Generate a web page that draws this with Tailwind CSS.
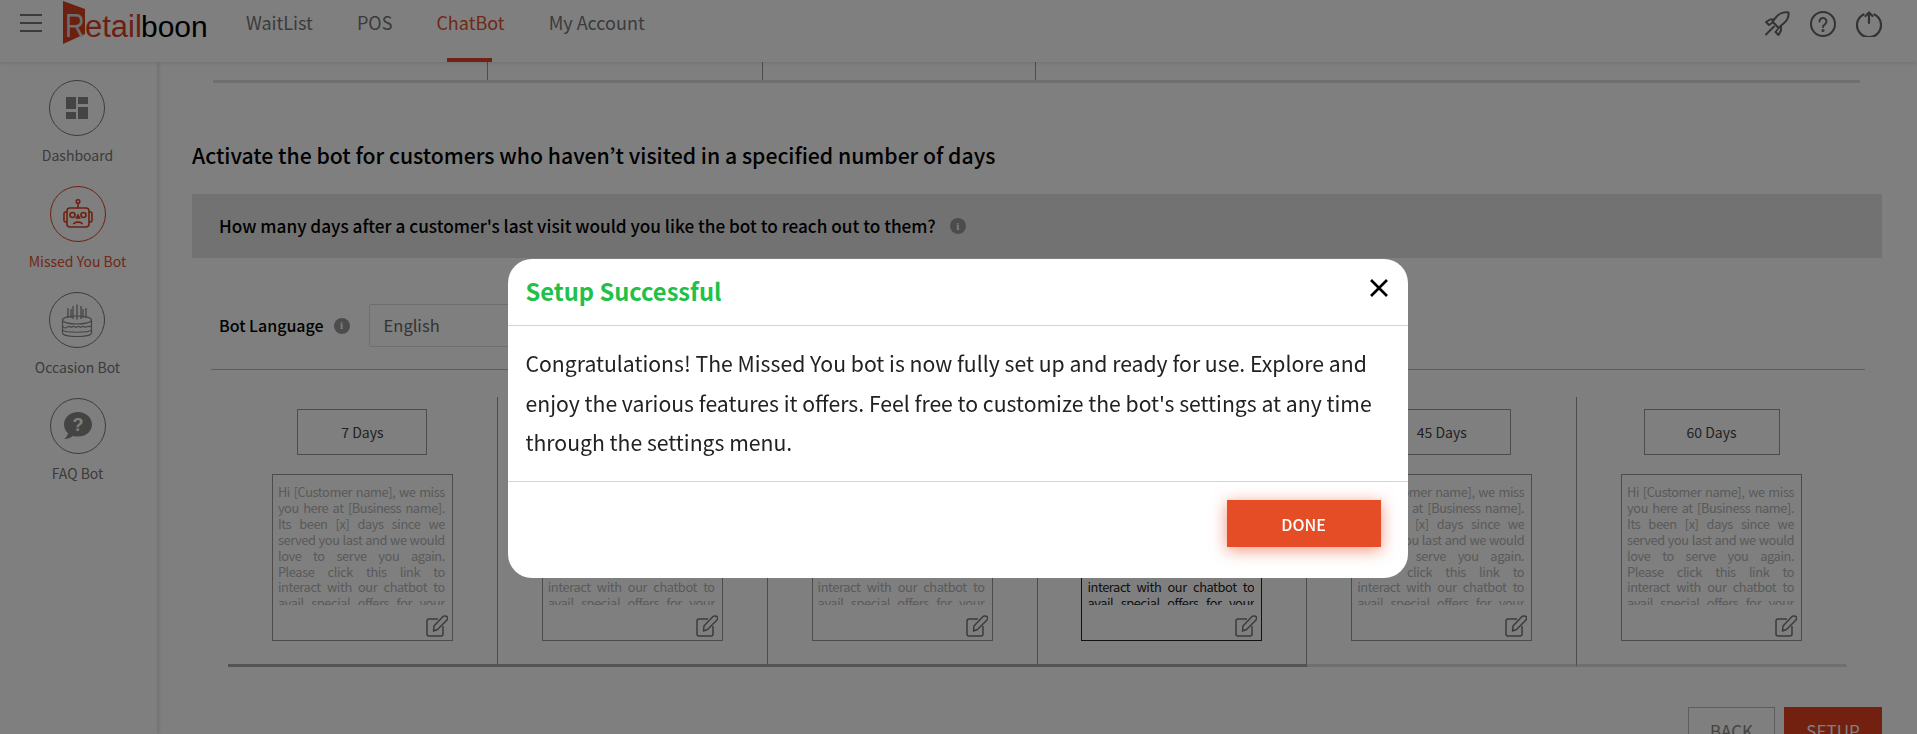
<!DOCTYPE html>
<html lang="en">
<head>
  <meta charset="UTF-8" />
  <title>Retailboon - Missed You Bot</title>
  <script src="https://cdn.jsdelivr.net/npm/@tailwindcss/browser@4"></script>
</head>
<body class="h-screen overflow-hidden bg-white font-['Noto_Sans_CJK_JP','Noto_Sans',sans-serif] text-[#222]">

  <!-- header -->
  <header class="h-[62px] flex items-start bg-white shadow-[0_1px_4px_rgba(0,0,0,0.12)] relative z-10">
    <button class="ml-[20px] mt-[14px] w-[22px] h-[18px] flex flex-col justify-between">
      <span class="block h-[2px] bg-[#777]"></span>
      <span class="block h-[2px] bg-[#777]"></span>
      <span class="block h-[2px] bg-[#777]"></span>
    </button>
    <div class="relative ml-[21px] w-[146px] h-[44px] mt-[1px]">
      <svg class="absolute left-0 top-0" width="24" height="44" viewBox="0 0 24 44"><polygon points="0,0 22,8 22,33 0,43" fill="#d9401f"/></svg>
      <div class="absolute left-[2px] top-[6px] flex items-baseline font-['Liberation_Sans',sans-serif] leading-[36px] whitespace-nowrap">
        <span class="text-[34px] text-[#ddd] inline-block w-[20px] origin-left scale-x-[0.8]">R</span><span class="text-[31px] text-[#d9401f] inline-block w-[56px]">etail</span><span class="text-[30px] text-black">boon</span>
      </div>
    </div>
    <nav class="flex ml-[37px] h-[62px] text-[18px] text-[#777]">
      <a class="pt-[9px] whitespace-nowrap">WaitList</a>
      <a class="ml-[44px] pt-[9px]">POS</a>
      <a class="ml-[44px] pt-[9px] whitespace-nowrap relative text-[#e4502f]">ChatBot<span class="absolute left-[11px] bottom-0 w-[45px] h-[4px] bg-[#e0472a]"></span></a>
      <a class="ml-[44px] pt-[9px] whitespace-nowrap">My Account</a>
    </nav>
    <div class="ml-auto mr-[35px] mt-[11px] flex gap-[20px] text-[#666]">
      <svg width="26" height="26" viewBox="0 0 26 26" fill="none" stroke="currentColor" stroke-width="2" stroke-linejoin="round" stroke-linecap="round">
        <path d="M24.500 1.500c-4.500-.6-8.500.6-11.500 3.600L8.500 10.500 14.500 17l5-4.500C23 9.500 25 5.500 24.500 1.500z"/><path d="M10 8.500H6L2 11l3 3 3-2"/><path d="M17 15v4.500l-2.500 4.500-3-3 2-2.500"/><path d="M10 15.500 2 23.500"/>
      </svg>
      <svg width="26" height="26" viewBox="0 0 26 26" fill="none" stroke="currentColor" stroke-width="2" stroke-linecap="round">
        <circle cx="13" cy="13" r="12"/><path d="M9.500 10.500a3.500 3.500 0 1 1 5.500 2.800c-1.200.8-2 1.400-2 2.700"/><circle cx="13" cy="19.500" r="0.600"/>
      </svg>
      <svg width="26" height="26" viewBox="0 0 26 26" fill="none" stroke="currentColor" stroke-width="2.200" stroke-linecap="round" stroke-linejoin="round">
        <path d="M7.500 3.500a12 12 0 1 0 11 0"/><path d="M13 12V1.500M9.500 5 13 1.500 16.500 5"/>
      </svg>
    </div>
  </header>

  <div class="flex h-[672px]">
    <!-- sidebar -->
    <aside class="w-[157px] shrink-0 pt-[18px] pr-[2px] flex flex-col items-center shadow-[2px_0_4px_rgba(0,0,0,0.12)] text-[14px] leading-[20px] text-[#777]">
      <div class="h-[106px] flex flex-col items-center">
        <div class="w-[56px] h-[56px] rounded-full border border-[#777] flex items-center justify-center">
          <svg width="22" height="22" viewBox="0 0 22 22" fill="#888"><rect width="10" height="12"/><rect x="12" width="10" height="7"/><rect y="15" width="10" height="7"/><rect x="12" y="10" width="10" height="12"/></svg>
        </div>
        <span class="mt-[9px]">Dashboard</span>
      </div>
      <div class="h-[106px] flex flex-col items-center text-[#e4502f]">
        <div class="w-[56px] h-[56px] rounded-full border border-[#d9401f] flex items-center justify-center">
          <svg width="30" height="30" viewBox="0 0 30 30" fill="none" stroke="#d9401f" stroke-width="1.600">
            <circle cx="15" cy="2.500" r="1.800"/><path d="M15 4.500V9"/><rect x="4" y="9" width="22" height="19" rx="3"/><path d="M4 13H2.500a1.500 1.500 0 0 0-1.500 1.500v7A1.500 1.500 0 0 0 2.500 23H4M26 13h1.500a1.500 1.500 0 0 1 1.500 1.500v7a1.500 1.500 0 0 1-1.500 1.500H26"/><circle cx="9.500" cy="16" r="2.500"/><circle cx="20.500" cy="16" r="2.500"/><path d="M15 16l1.500 3h-3z" fill="#d9401f"/><path d="M10.500 25c1.500-2.500 7.500-2.500 9 0"/>
          </svg>
        </div>
        <span class="mt-[9px]">Missed You Bot</span>
      </div>
      <div class="h-[106px] flex flex-col items-center">
        <div class="w-[56px] h-[56px] rounded-full border border-[#777] flex items-center justify-center">
          <svg width="32" height="34" viewBox="0 0 32 34" fill="none" stroke="#888" stroke-width="1.200">
            <path d="M7 5v10M12 3v13M16 1.500v15M20 3v13M25 5v10M10 6v9M22 6v9" stroke-width="1.300"/>
            <ellipse cx="16" cy="17" rx="14.500" ry="4"/><path d="M1.500 17v13c0 2 6.500 3.500 14.500 3.500s14.500-1.500 14.500-3.500V17"/><path d="M1.500 23c2 2.500 3.500 2.500 5 .8s3 1.700 4.800 0 3 1.700 4.700 0 3 1.700 4.800 0 3 1.700 4.700 0 3 1 4.500-.8"/><path d="M1.500 27c2 3 27 3 29 0"/>
          </svg>
        </div>
        <span class="mt-[9px]">Occasion Bot</span>
      </div>
      <div class="flex flex-col items-center">
        <div class="w-[56px] h-[56px] rounded-full border border-[#777] flex items-center justify-center">
          <svg width="30" height="28" viewBox="0 0 30 28"><path fill="#888" d="M15 0C7 0 1 5.500 1 12.500c0 3.500 1.500 6.500 4 8.700-.5 2.500-2 4.500-4 5.800 3.500 0 6.500-1 9-3 1.600.4 3.300.6 5 .6 8 0 14-5.200 14-12.100S23 0 15 0z"/><text x="15" y="19" text-anchor="middle" font-size="18" font-weight="700" font-family="Liberation Sans, sans-serif" fill="#fff">?</text></svg>
        </div>
        <span class="mt-[9px]">FAQ Bot</span>
      </div>
    </aside>

    <!-- main content -->
    <main class="flex-1 pl-[35px] pr-[35px] min-w-0">
      <div class="ml-[21px] w-[1647px] h-[21px] flex border-b-[3px] border-[#dedede]">
        <div class="w-[275px] border-r border-[#999]"></div>
        <div class="w-[275px] border-r border-[#999]"></div>
        <div class="w-[273px] border-r border-[#999]"></div>
      </div>

      <h1 class="mt-[56px] text-[21.200px] leading-[32px] font-medium text-black">Activate the bot for customers who haven’t visited in a specified number of days</h1>

      <div class="mt-[23px] h-[64px] bg-[#e4e4e4] pl-[27px] flex items-center text-[17.200px] font-medium text-black">
        How many days after a customer's last visit would you like the bot to reach out to them?
        <span class="ml-[14px] w-[16px] h-[16px] rounded-full bg-[#999] text-white text-[11px] font-bold flex items-center justify-center font-['Liberation_Serif',serif]">i</span>
      </div>

      <div class="mt-[46px] pl-[27px] h-[43px] flex items-center text-black">
        <span class="text-[16px] font-medium -mt-[2px]">Bot Language</span>
        <span class="ml-[10px] w-[16px] h-[16px] rounded-full bg-[#999] text-white text-[11px] font-bold flex items-center justify-center font-['Liberation_Serif',serif]">i</span>
        <div class="ml-[19px] w-[300px] h-[43px] border border-[#ddd] rounded-[2px] pl-[14px] flex items-center text-[16.500px] text-[#666]">English</div>
      </div>

      <div class="ml-[19px] w-[1654px] mt-[22px] border-b border-[#bbb]"></div>

      <div id="days" class="ml-[36px] w-[1619px] mt-[27px] grid grid-cols-6"></div>

      <div class="mt-[40px] flex justify-end gap-[9px] text-[17px]">
        <button class="w-[87px] h-[47px] border border-[#bbb] text-[#888]">BACK</button>
        <button class="w-[98px] h-[47px] bg-[#e4411f] text-white">SETUP</button>
      </div>
    </main>
  </div>

  <!-- modal -->
  <div class="fixed inset-0 z-20 bg-black/50 flex justify-center pt-[259px] pr-[2px]">
    <div class="w-[900px] h-[319px] bg-white rounded-[24px] flex flex-col">
      <div class="h-[67px] shrink-0 border-b border-[#d4d4d4] pl-[18px] pr-[19px] flex items-center justify-between">
        <h2 class="text-[23.700px] font-semibold text-[#1fc14a]">Setup Successful</h2>
        <svg class="mb-[8px]" width="20" height="20" viewBox="0 0 20 20" stroke="#000" stroke-width="2.600"><path d="M2 2l16 16M18 2L2 18"/></svg>
      </div>
      <p class="h-[156px] shrink-0 border-b border-[#d4d4d4] pl-[18px] pr-[30px] pt-[17px] text-[21.200px] leading-[39.500px] text-[#222]">Congratulations! The Missed You bot is now fully set up and ready for use. Explore and enjoy the various features it offers. Feel free to customize the bot's settings at any time through the settings menu.</p>
      <div class="flex justify-end pr-[27px] pt-[18px]">
        <button class="w-[154px] h-[47px] bg-[#e54d26] text-white text-[16px] font-medium shadow-[0_3px_16px_rgba(229,77,38,0.6)]">DONE</button>
      </div>
    </div>
  </div>

  <script>
    const days = [
      { label: "7 Days", w: "w-[130px]", box: "border-[#999]", text: "text-[#b4b4b4]" },
      { label: "15 Days", w: "w-[139px]", box: "border-[#999]", text: "text-[#b4b4b4]" },
      { label: "21 Days", w: "w-[139px]", box: "border-[#999]", text: "text-[#b4b4b4]" },
      { label: "30 Days", w: "w-[139px]", box: "border-[#222]", text: "text-[#222]" },
      { label: "45 Days", w: "w-[139px]", box: "border-[#999]", text: "text-[#b4b4b4]" },
      { label: "60 Days", w: "w-[136px]", box: "border-[#999]", text: "text-[#b4b4b4]" },
    ];
    const msg = "Hi [Customer name], we miss you here at [Business name]. Its been [x] days since we served you last and we would love to serve you again. Please click this link to interact with our chatbot to avail special offers for your next visit.";
    document.getElementById("days").innerHTML = days.map((d, i) => `
      <div class="h-[270px] pt-[12px] flex flex-col items-center border-b-[3px] border-r ${i < 4 ? "border-b-[#a8a8a8]" : "border-b-[#dedede]"} ${i < 5 ? "border-r-[#999]" : "border-r-transparent"}">
        <div class="${d.w} h-[46px] border border-[#999] flex items-center justify-center text-[14px] text-[#444]">${d.label}</div>
        <div class="mt-[19px] w-[181px] h-[167px] border ${d.box} pl-[5px] pr-[7px] pt-[9px] flex flex-col">
          <p class="h-[121px] overflow-hidden text-[12.800px] tracking-[-0.4px] leading-[15.900px] text-justify ${d.text}">${msg}</p>
          <svg class="self-end mt-[10px] -mr-[3px]" width="22" height="22" viewBox="0 0 22 22" fill="none" stroke="#777" stroke-width="1.500" stroke-linejoin="round"><path d="M12 4H3a2 2 0 0 0-2 2v13a2 2 0 0 0 2 2h12a2 2 0 0 0 2-2v-8"/><path d="M8 11 17 1.500c1-1 3.500-.5 4 0s.5 2.500 0 3.500L11.500 14.500 7.500 16z"/></svg>
        </div>
      </div>`).join("");
  </script>
</body>
</html>
